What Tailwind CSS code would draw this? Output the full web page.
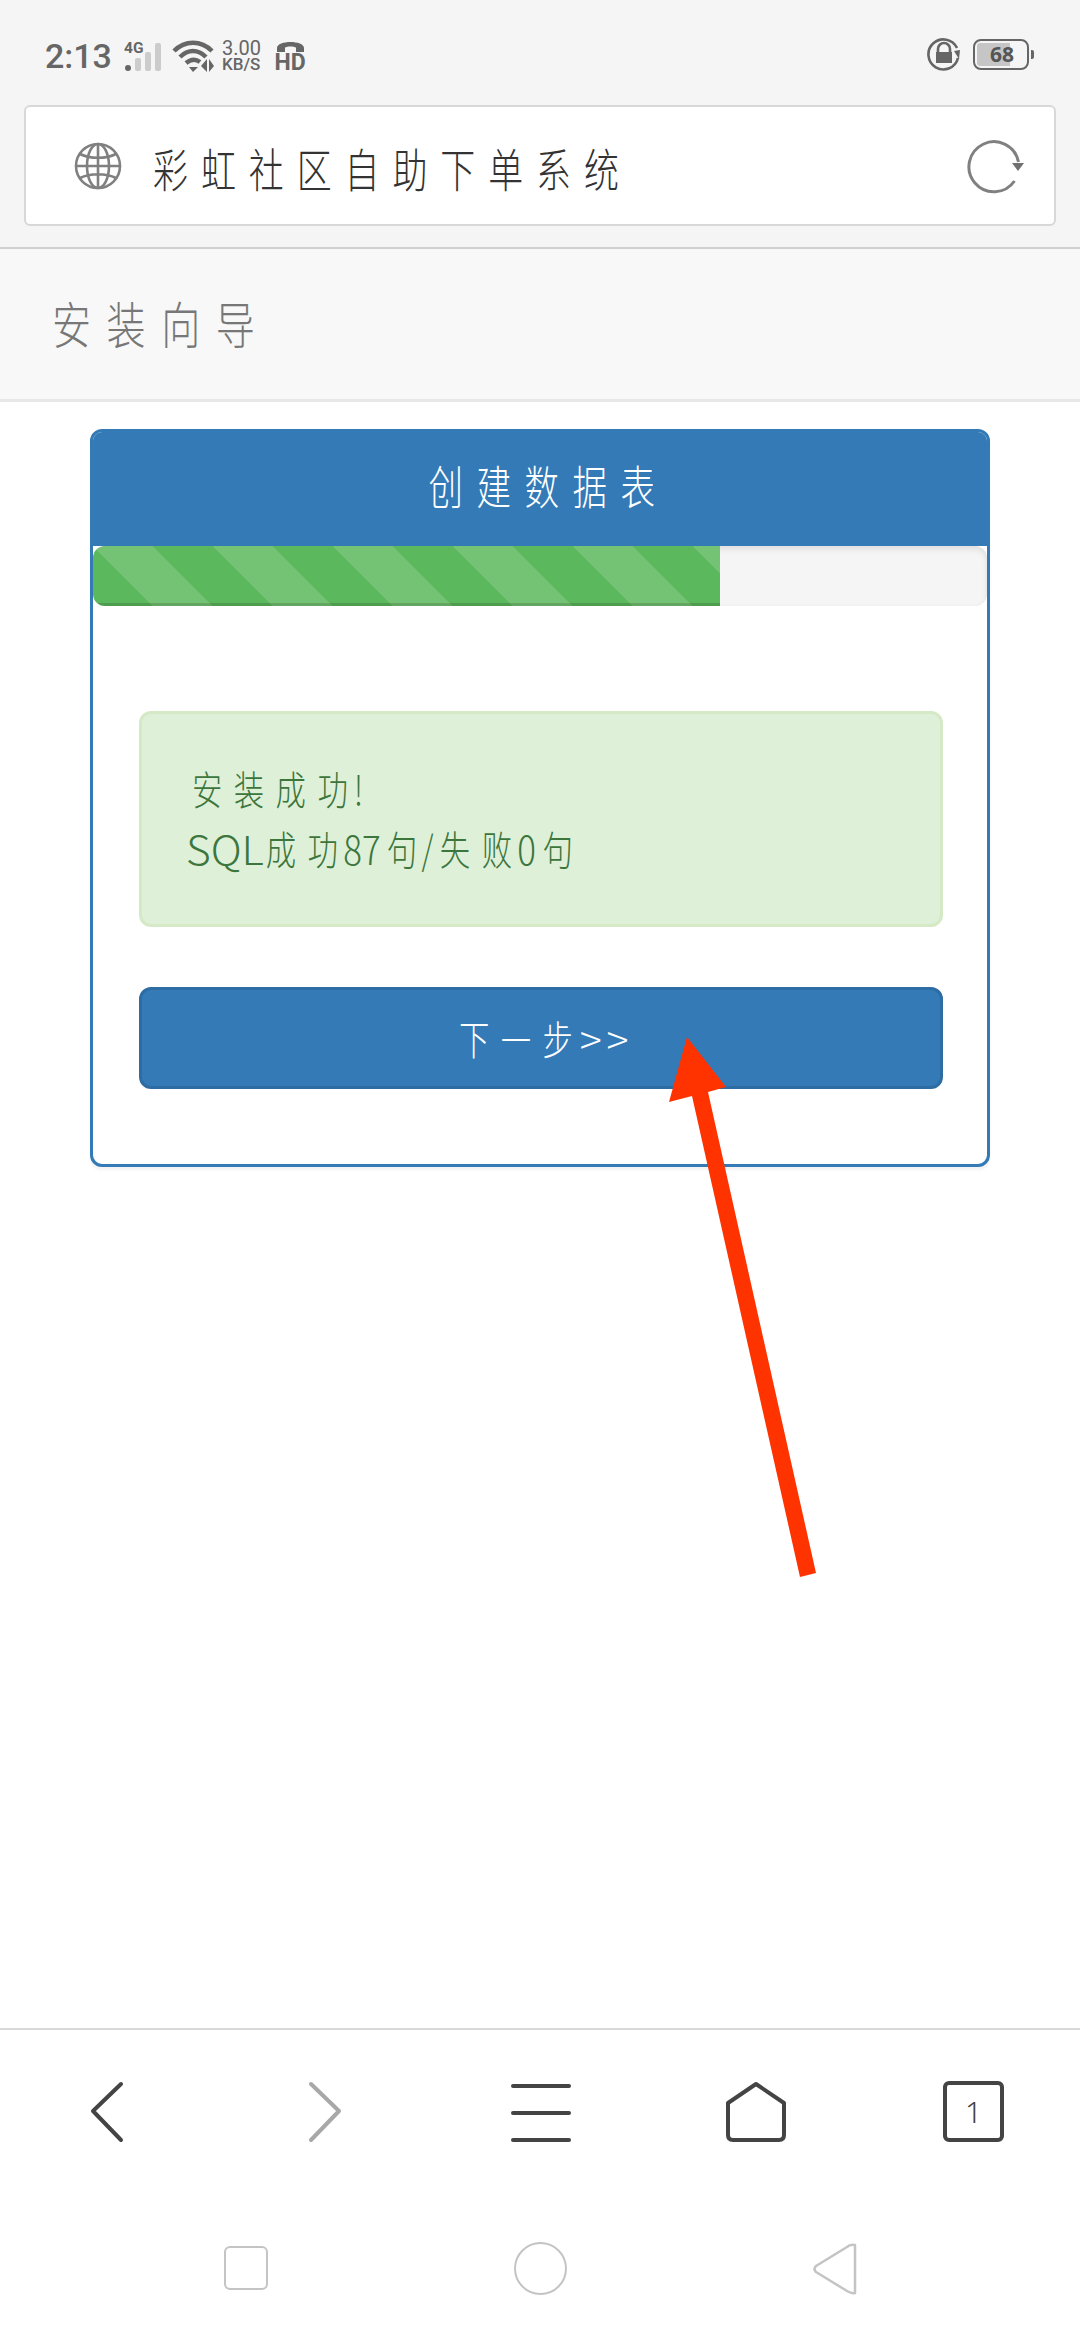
<!DOCTYPE html>
<html lang="zh-CN">
<head>
<meta charset="UTF-8">
<meta name="viewport" content="width=device-width, initial-scale=1.0">
<title>安装向导</title>
<script src="https://cdn.jsdelivr.net/npm/@tailwindcss/browser@4"></script>
</head>
<body class="bg-white font-['Noto_Sans_CJK_SC','Noto_Sans',sans-serif]">
<div class="relative w-[1080px] h-[2340px] overflow-hidden flex flex-col bg-white">

  <!-- browser top -->
  <div class="h-[249px] shrink-0 bg-[#f5f5f5] border-b-[2px] border-[#d0d0d0] flex flex-col">
    <!-- status bar -->
    <div class="h-[105px] shrink-0 flex justify-between items-start pt-[38px] pl-[45px] pr-[46px]">
      <div class="flex items-center text-[#666]">
        <span class="font-['Roboto'] font-medium text-[34px] leading-[36px] w-[77px]">2:13</span>
        <div class="relative w-[40px] h-[32px]">
          <span class="absolute left-[2px] top-[1px] font-['Roboto'] font-bold text-[15.5px] leading-[14px]">4G</span>
          <svg width="40" height="32" viewBox="0 0 40 32">
            <circle cx="6" cy="28" r="3" fill="#666"/>
            <rect x="13" y="18" width="6" height="13" rx="2" fill="#ccc"/>
            <rect x="23" y="12" width="6" height="19" rx="2" fill="#ccc"/>
            <rect x="33" y="3" width="6" height="28" rx="2" fill="#ccc"/>
          </svg>
        </div>
        <svg width="44" height="34" viewBox="0 0 44 34" class="ml-[9px]">
          <path d="M3 12C14 1 30 1 41 12" fill="none" stroke="#666" stroke-width="4.5"/>
          <path d="M9 18C17 10 27 10 35 18" fill="none" stroke="#666" stroke-width="4.5"/>
          <path d="M15 24C20 20 25 20 29 23" fill="none" stroke="#666" stroke-width="4.5"/>
          <path d="M18 28L27 28L22 33Z M36 20V33L30 27Z M38 20V33L43 27Z" fill="#666"/>
        </svg>
        <div class="ml-[7px] w-[47px] flex flex-col font-['Roboto'] leading-none">
          <span class="text-[20px] h-[17px] leading-[17px]">3.00</span>
          <span class="text-[17px] font-medium h-[15px] leading-[15px]">KB/S</span>
        </div>
        <div class="ml-[5px] w-[32px] flex flex-col items-center">
          <svg width="31" height="13" viewBox="0 0 31 13">
            <path d="M2 12V8C2 0 29 0 29 8V12H21V8C21 6 10 6 10 8V12Z" fill="#666"/>
          </svg>
          <span class="font-['Roboto'] font-bold text-[23px] leading-[19px]">HD</span>
        </div>
      </div>
      <div class="flex items-center -mt-[1px]">
        <svg width="34" height="34" viewBox="0 0 34 34">
          <path d="M30 11A15 15 0 1 0 31 21" fill="none" stroke="#666" stroke-width="2.6"/>
          <path d="M27 14L33 13L32 22Z" fill="#666"/>
          <path d="M11 16V12A6 6 0 0 1 23 12V16" fill="none" stroke="#666" stroke-width="2.6"/>
          <rect x="9" y="15" width="16" height="11" fill="#666"/>
        </svg>
        <div class="relative ml-[12px] w-[56px] h-[31px] border-[2.5px] border-[#666] rounded-[8px] flex items-center">
          <div class="absolute left-[2px] top-[2px] bottom-[2px] w-[33px] rounded-l-[3px] bg-[#c6c6c6]"></div>
          <span class="relative w-full text-center pl-[2px] font-['Open_Sans'] font-bold text-[#555] text-[21px] leading-none">68</span>
        </div>
        <div class="ml-[2px] w-[3px] h-[9px] rounded-r-[2px] bg-[#666]"></div>
      </div>
    </div>

    <!-- address bar -->
    <div class="mx-[24px] h-[121px] bg-white border-[2px] border-[#d8d8d8] rounded-[6px] flex items-center justify-between pl-[48px] pr-[30px]">
      <div class="flex items-center">
        <svg width="48" height="48" viewBox="0 0 48 48" fill="none" stroke="#808080" stroke-width="2.6">
          <circle cx="24" cy="24" r="22"/>
          <ellipse cx="24" cy="24" rx="11" ry="22"/>
          <path d="M24 2V46M2 24H46M6 12C16 17 32 17 42 12M6 36C16 31 32 31 42 36"/>
        </svg>
        <span class="inline-block ml-[31px] mt-[3px] origin-left scale-x-[0.76] text-[46px] leading-none tracking-[17px] font-light text-[#333] whitespace-nowrap">彩虹社区自助下单系统</span>
      </div>
      <svg width="58" height="56" viewBox="0 0 58 56" fill="none">
        <path d="M52.5 24A25 25 0 1 0 48.5 43" stroke="#808080" stroke-width="3"/>
        <path d="M46 25H58L52 33Z" fill="#707070"/>
      </svg>
    </div>
  </div>

  <!-- page header -->
  <div class="h-[153px] shrink-0 bg-[#f8f8f8] border-b-[3px] border-[#e7e7e7] flex items-center pl-[52px] pb-[5px]">
    <span class="inline-block origin-left scale-x-[0.78] text-[50px] leading-none tracking-[20px] font-light text-[#777] whitespace-nowrap">安装向导</span>
  </div>

  <!-- card -->
  <div class="mt-[27px] mx-[90px] w-[900px] h-[738px] shrink-0 border-[3px] border-[#337ab7] rounded-[12px] bg-white shadow-[0_3px_3px_rgba(0,0,0,.05)] overflow-hidden flex flex-col">
    <div class="h-[114px] shrink-0 bg-[#337ab7] flex items-center justify-center pb-[10px]">
      <span class="inline-block pl-[21px] scale-x-[0.75] text-[46px] leading-none tracking-[18px] font-light text-white whitespace-nowrap">创建数据表</span>
    </div>
    <div class="h-[60px] shrink-0 rounded-[12px] bg-[#f5f5f5] shadow-[inset_0_3px_6px_rgba(0,0,0,.1)] overflow-hidden">
      <div class="w-[627px] h-full bg-[#5cb85c] shadow-[inset_0_-3px_0_rgba(0,0,0,.15)] bg-[linear-gradient(45deg,rgba(255,255,255,.15)_25%,transparent_25%,transparent_50%,rgba(255,255,255,.15)_50%,rgba(255,255,255,.15)_75%,transparent_75%,transparent)] bg-size-[120px_120px]"></div>
    </div>
    <div class="flex flex-col pl-[46px] pr-[44px] pt-[105px]">
      <div class="h-[216px] border-[3px] border-[#d6e9c6] rounded-[12px] bg-[#dff0d8] text-[#3c763d] flex flex-col justify-center pl-[44px] pb-[2px]">
        <div class="h-[60px] flex items-center">
          <span class="inline-block ml-[6px] origin-left scale-x-[0.76] text-[40px] leading-none font-light whitespace-nowrap"><span class="tracking-[15px]">安装成</span><span class="tracking-[8px]">功</span>!</span>
        </div>
        <div class="h-[60px] flex items-center">
          <div class="flex origin-left scale-x-[0.76] text-[40px] leading-none font-light whitespace-nowrap">
            <span class="w-[105px]"><span class="inline-block origin-left scale-x-[1.4]">SQL</span></span>
            <span class="w-[55px]">成</span>
            <span class="w-[47px]">功</span>
            <span class="w-[57px]"><span class="inline-block origin-left scale-x-[1.15]">87</span></span>
            <span class="w-[46px]">句</span>
            <span class="w-[24px]">/</span>
            <span class="w-[55px]">失</span>
            <span class="w-[47px]">败</span>
            <span class="w-[33px]"><span class="inline-block origin-left scale-x-[1.15]">0</span></span>
            <span>句</span>
          </div>
        </div>
      </div>
      <div class="mt-[60px] h-[102px] border-[3px] border-[#2e6da4] rounded-[12px] bg-[#337ab7] text-white flex items-center pl-[317px]">
        <div class="flex origin-left scale-x-[0.76] text-[40px] leading-none font-light whitespace-nowrap">
          <span class="w-[55px]">下</span>
          <span class="w-[55px]">一</span>
          <span class="w-[49px]">步</span>
          <span class="w-[35px]"><span class="inline-block origin-left scale-x-[1.35]">&gt;</span></span>
          <span><span class="inline-block origin-left scale-x-[1.35]">&gt;</span></span>
        </div>
      </div>
    </div>
  </div>

  <!-- bottom browser nav -->
  <div class="mt-auto h-[312px] shrink-0 border-t-[2px] border-[#d8d8d8] flex flex-col">
    <div class="h-[174px] flex items-start pt-[51px] pl-[90px]">
      <svg width="34" height="62" viewBox="0 0 34 62" fill="none" stroke="#444" stroke-width="4" stroke-linecap="round" stroke-linejoin="round"><path d="M31 3L3 30L31 59"/></svg>
      <svg width="34" height="62" viewBox="0 0 34 62" fill="none" stroke="#a8a8a8" stroke-width="4" stroke-linecap="round" stroke-linejoin="round" class="ml-[184px]"><path d="M3 3L31 30L3 59"/></svg>
      <svg width="60" height="62" viewBox="0 0 60 62" fill="none" stroke="#444" stroke-width="4" stroke-linecap="round" class="ml-[169px]"><path d="M2 5H58M2 32H58M2 59H58"/></svg>
      <svg width="62" height="62" viewBox="0 0 62 62" fill="none" stroke="#444" stroke-width="4" stroke-linejoin="round" class="ml-[154px]"><path d="M31 3L59 22V54Q59 59 54 59H8Q3 59 3 54V22Z"/></svg>
      <div class="ml-[156px] w-[61px] h-[61px] border-[4px] border-[#444] rounded-[6px] flex items-center justify-center font-['Noto_Sans'] font-light text-[#444] text-[30px] leading-none">1</div>
    </div>
    <div class="flex-1 relative flex items-start justify-between pt-[38px] pl-[224px] pr-[222px]">
      <div class="mt-[4px] w-[44px] h-[44px] border-[2.5px] border-[#c4c4c4] rounded-[6px]"></div>
      <div class="w-[53px] h-[53px] border-[2.5px] border-[#c4c4c4] rounded-full"></div>
      <svg width="46" height="54" viewBox="0 0 46 54" fill="none" stroke="#c4c4c4" stroke-width="2.5" stroke-linejoin="round"><path d="M43 3Q38 2 35 5L4 24Q1 27 4 30L35 49Q40 52 43 51Z"/></svg>
    </div>
  </div>

  <!-- red annotation arrow drawn over the page -->
  <svg class="absolute left-0 top-0 pointer-events-none" width="1080" height="2340" viewBox="0 0 1080 2340">
    <path d="M687 1037L726 1087L708 1092L816 1573L800 1577L692 1096L669 1102Z" fill="#ff3300"/>
  </svg>
</div>
</body>
</html>
